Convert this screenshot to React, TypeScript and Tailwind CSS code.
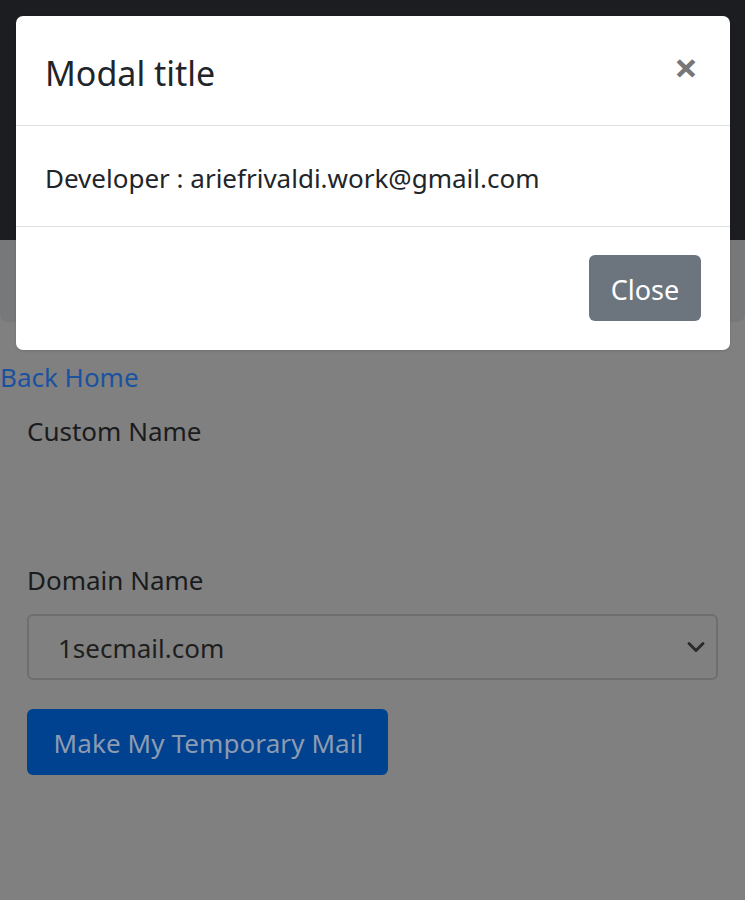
import { ChevronDown } from 'lucide-react';

const font = { fontFamily: '"Noto Sans", "Open Sans", sans-serif' };

export default function App() {
  return (
    <div className="relative min-h-[900px] bg-[#808080] text-[#1a1b1d]" style={font}>
      {/* Navbar */}
      <div className="h-[240px] bg-[#1b1d21]" />
      {/* Jumbotron */}
      <div className="h-[82px] bg-[#76787a] rounded-b-[8px]" />

      <a href="#" className="block mt-[36px] text-[26px] leading-[39px] text-[#1a52a0]">
        Back Home
      </a>

      <div className="px-[27px]">
        <p className="mt-[15px] text-[26px] leading-[39px]">Custom Name</p>
        <div className="h-[110px]" />
        <p className="text-[26px] leading-[39px]">Domain Name</p>
        <div className="mt-[14px] h-[66px] flex items-center justify-between rounded-[6px] border-2 border-[#6e6e6e] pl-[29px] pr-[6px] pt-[3px] text-[26px] text-[#1e1e1e]">
          <span>1secmail.com</span>
          <ChevronDown size={28} className="text-[#2a2a2a] -mt-[3px]" strokeWidth={2.5} />
        </div>
        <button className="mt-[29px] h-[66px] w-[361px] rounded-[6px] bg-[#00428f] pt-[3px] pl-[2px] text-[26px] tracking-[0.1px] text-[#8d9bb0]">
          Make My Temporary Mail
        </button>
      </div>

      {/* Modal */}
      <div className="absolute top-[16px] left-[16px] w-[714px] rounded-[7px] bg-white shadow-sm">
        <div className="h-[110px] flex items-center justify-between pl-[29px] pr-[32px] pt-[6px] border-b border-[#dee2e6]">
          <h5 className="text-[34px] text-[#212529]">Modal title</h5>
          <span className="text-[42px] font-bold text-[#777] leading-none -mt-[14px]">×</span>
        </div>
        <div className="h-[101px] flex items-center pl-[29px] pt-[5px] border-b border-[#dee2e6] text-[26px] text-[#212529]">
          Developer : ariefrivaldi.work@gmail.com
        </div>
        <div className="h-[123px] flex items-start justify-end pt-[28px] pr-[29px]">
          <button className="h-[66px] w-[112px] rounded-[6px] bg-[#6c757d] pt-[4px] text-white text-[27px]">
            Close
          </button>
        </div>
      </div>
    </div>
  );
}
